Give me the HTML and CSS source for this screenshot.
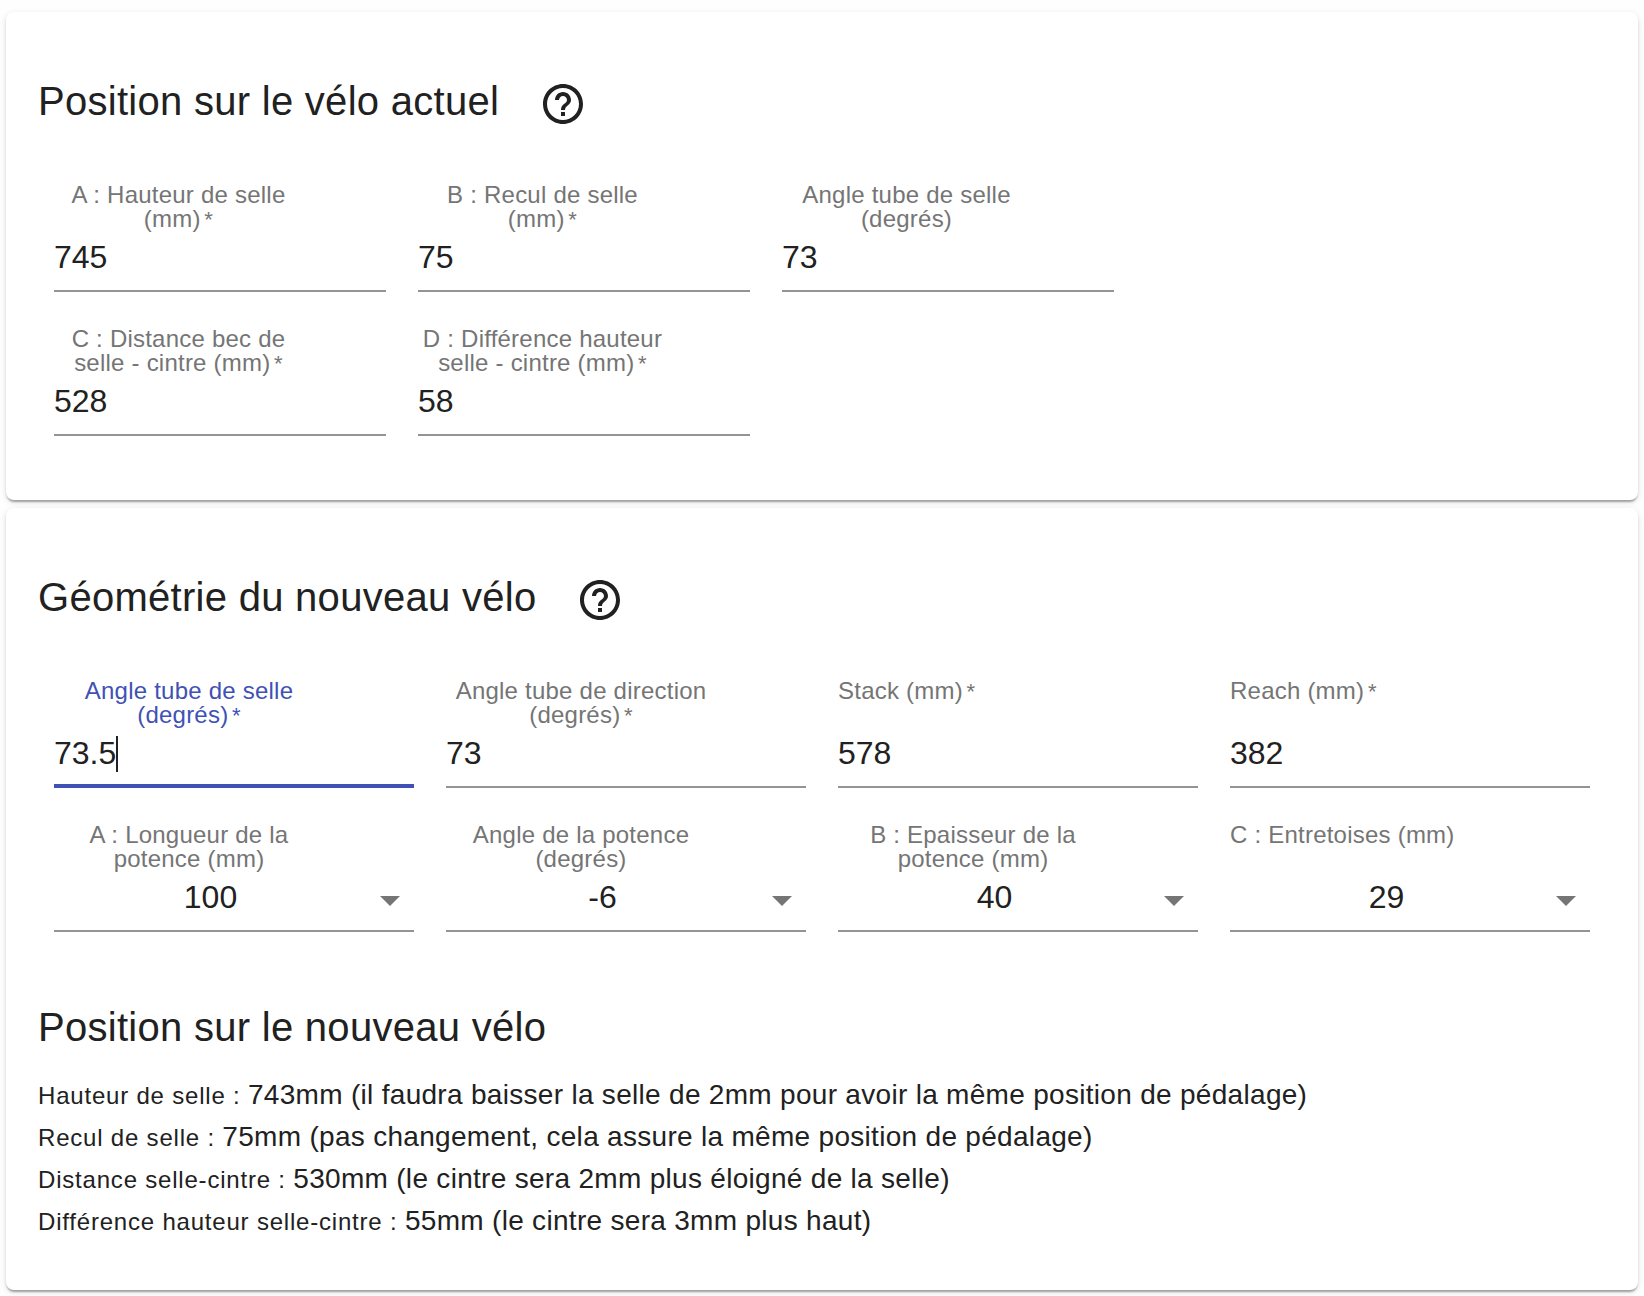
FILE: index.html
```html
<!DOCTYPE html>
<html lang="fr">
<head>
<meta charset="utf-8">
<title>Position vélo</title>
<link rel="stylesheet" href="styles.css">
</head>
<body>
<svg width="0" height="0" class="defs">
  <symbol id="help" viewBox="0 0 24 24"><path d="M11 18h2v-2h-2v2zm1-16C6.480 2 2 6.480 2 12s4.480 10 10 10 10-4.480 10-10S17.520 2 12 2zm0 18c-4.410 0-8-3.590-8-8s3.590-8 8-8 8 3.590 8 8-3.590 8-8 8zm0-14c-2.210 0-4 1.790-4 4h2c0-1.100.9-2 2-2s2 .9 2 2c0 2-3 1.750-3 5h2c0-2.250 3-2.500 3-5 0-2.210-1.790-4-4-4z"/></symbol>
  <symbol id="arrow" viewBox="0 0 24 24"><path d="M7 10l5 5 5-5z"/></symbol>
</svg>
<main class="page">
  <section class="card card-current">
    <header class="card-header">
      <h2 class="title">Position sur le vélo actuel</h2>
      <svg class="help"><use href="#help"/></svg>
    </header>
    <div class="fields fields-current">
      <div class="field"><label class="label">A : Hauteur de selle<br>(mm)<span class="star">&thinsp;*</span></label><div class="input">745</div></div>
      <div class="field"><label class="label">B : Recul de selle<br>(mm)<span class="star">&thinsp;*</span></label><div class="input">75</div></div>
      <div class="field"><label class="label">Angle tube de selle<br>(degrés)</label><div class="input">73</div></div>
      <div class="field"><label class="label">C : Distance bec de<br>selle - cintre (mm)<span class="star">&thinsp;*</span></label><div class="input">528</div></div>
      <div class="field"><label class="label">D : Différence hauteur<br>selle - cintre (mm)<span class="star">&thinsp;*</span></label><div class="input">58</div></div>
    </div>
  </section>

  <section class="card card-new">
    <header class="card-header">
      <h2 class="title">Géométrie du nouveau vélo</h2>
      <svg class="help"><use href="#help"/></svg>
    </header>
    <div class="fields fields-new">
      <div class="field focused"><label class="label">Angle tube de selle<br>(degrés)<span class="star">&thinsp;*</span></label><div class="input">73.5<span class="caret"></span></div></div>
      <div class="field"><label class="label">Angle tube de direction<br>(degrés)<span class="star">&thinsp;*</span></label><div class="input">73</div></div>
      <div class="field"><label class="label short">Stack (mm)<span class="star">&thinsp;*</span></label><div class="input">578</div></div>
      <div class="field"><label class="label short">Reach (mm)<span class="star">&thinsp;*</span></label><div class="input">382</div></div>
      <div class="field"><label class="label">A : Longueur de la<br>potence (mm)</label><div class="input select"><span class="value">100</span><svg class="arrow"><use href="#arrow"/></svg></div></div>
      <div class="field"><label class="label">Angle de la potence<br>(degrés)</label><div class="input select"><span class="value">-6</span><svg class="arrow"><use href="#arrow"/></svg></div></div>
      <div class="field"><label class="label">B : Epaisseur de la<br>potence (mm)</label><div class="input select"><span class="value">40</span><svg class="arrow"><use href="#arrow"/></svg></div></div>
      <div class="field"><label class="label short">C : Entretoises (mm)</label><div class="input select"><span class="value">29</span><svg class="arrow"><use href="#arrow"/></svg></div></div>
    </div>
    <h2 class="title results-title">Position sur le nouveau vélo</h2>
    <div class="results">
      <div class="result"><span class="name">Hauteur de selle : </span>743mm (il faudra baisser la selle de 2mm pour avoir la même position de pédalage)</div>
      <div class="result"><span class="name">Recul de selle : </span>75mm (pas changement, cela assure la même position de pédalage)</div>
      <div class="result"><span class="name">Distance selle-cintre : </span>530mm (le cintre sera 2mm plus éloigné de la selle)</div>
      <div class="result"><span class="name">Différence hauteur selle-cintre : </span>55mm (le cintre sera 3mm plus haut)</div>
    </div>
  </section>
</main>
</body>
</html>
```
FILE: styles.css
```css
* { box-sizing: border-box; }

body {
  margin: 0;
  background: #fefefe;
  color: #212121;
  font-family: "Liberation Sans", Arial, Helvetica, sans-serif;
}

.defs { display: block; }

.page {
  display: flex;
  flex-direction: column;
  gap: 8px;
  height: 1296px;
  padding: 12px 6px 0;
}

.card {
  padding: 56px 32px 0;
  background: #fff;
  border-radius: 8px;
  box-shadow: 0 4px 2px -2px rgba(0, 0, 0, 0.2), 0 2px 2px 0 rgba(0, 0, 0, 0.14), 0 2px 6px 0 rgba(0, 0, 0, 0.12);
}

.card-current { height: 488px; }
.card-new { height: 782px; }

.card-header {
  display: flex;
  align-items: center;
  gap: 40px;
  height: 64px;
}

.title {
  margin: 0;
  padding-top: 1px;
  font-size: 40px;
  font-weight: 400;
  line-height: 64px;
  letter-spacing: 0.28px;
}

.help {
  width: 48px;
  height: 48px;
  margin-top: 8px;
  fill: #212121;
}

.fields {
  display: grid;
  column-gap: 32px;
  row-gap: 35px;
  margin: 51px 16px 0;
}

.fields-current { grid-template-columns: repeat(3, 332px); }
.fields-new { grid-template-columns: repeat(4, 360px); }

.field {
  display: flex;
  flex-direction: column;
  justify-content: space-between;
  height: 109px;
}

.label {
  width: 75%;
  color: #757575;
  font-size: 24px;
  line-height: 24px;
  letter-spacing: 0.225px;
  text-align: center;
  white-space: nowrap;
}

.label.short { text-align: left; }

.star {
  margin-left: -1px;
  font-size: 22px;
  line-height: 1;
}

.input {
  display: flex;
  height: 54px;
  border-bottom: 2px solid #949494;
  font-size: 32px;
  line-height: 38px;
}

.focused .label { color: #3f51b5; }
.focused .input { border-bottom: 4px solid #3f51b5; }

.caret {
  width: 2px;
  height: 36px;
  margin-top: 2px;
  background: #212121;
}

.value {
  flex: 1;
  padding-left: 1px;
  text-align: center;
}

.arrow {
  width: 48px;
  height: 48px;
  margin-top: -2px;
  fill: #757575;
}

.results-title { margin-top: 62px; }

.results { margin-top: 15px; }

.result {
  height: 42px;
  font-size: 28px;
  line-height: 42px;
  letter-spacing: 0.3px;
  white-space: pre;
}

.name {
  font-size: 24px;
  letter-spacing: 0.8px;
}
```
